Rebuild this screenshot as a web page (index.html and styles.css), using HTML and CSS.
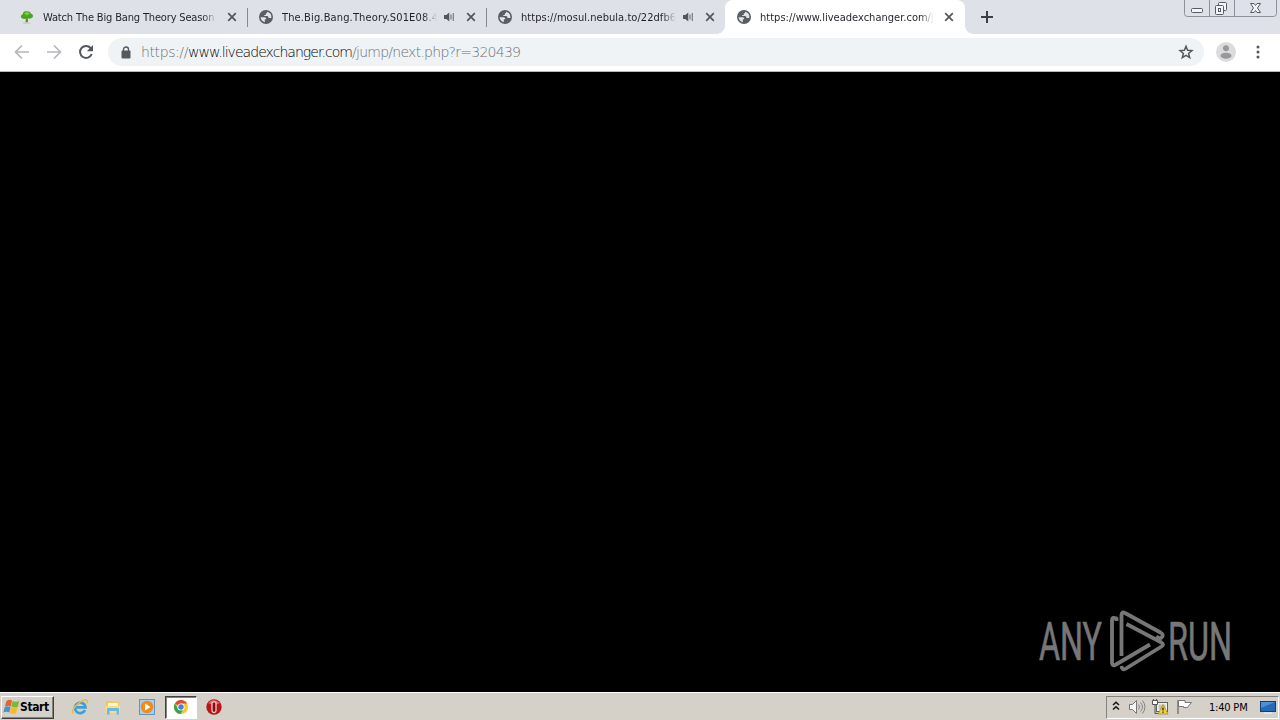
FILE: index.html
```html
<!DOCTYPE html>
<html lang="en">
<head>
<meta charset="utf-8">
<title>Browser</title>
<link rel="stylesheet" href="styles.css">
</head>
<body>
<svg width="0" height="0" class="defs">
  <symbol id="globe" viewBox="0 0 16 16"><circle cx="8" cy="8" r="7" fill="#5a5e63"/><path d="M2.500 8.300H6.500Q8.500 8.500 8.300 10.300H6.800V13.300Q3.200 12.300 2.500 8.300ZM9.300 2.700Q9.300 4.300 7.800 4.500V6H6.300V7H9.300Q10.500 7.200 10.500 9H13.300Q14 4.200 9.300 2.700Z" fill="#e1e4e9"/></symbol>
  <symbol id="close" viewBox="0 0 10 10"><path d="M1.200 1.200 8.800 8.800M8.800 1.200 1.200 8.800" stroke="#53575c" stroke-width="1.700"/></symbol>
  <symbol id="sound" viewBox="0 0 12 12"><path d="M1 4h2.300L6.300 1.500v9L3.300 8H1Z" fill="#53575c"/><path d="M8 3.500v5M10.300 2v8" stroke="#777b82" stroke-width="1.200"/></symbol>
</svg>
<header class="tabs">
  <div class="tab">
    <svg class="fav" viewBox="0 0 16 16"><path d="M7 9 6.500 13h2.500L8.800 9Z" fill="#916c3c"/><path d="M3 14q5-1.500 9 0-4 1-9 0" fill="#a8c79c"/><path d="M2 8.500Q1.500 6 4 5 4 2 7 2.300 11 1.500 12 4.500 15 6 13.500 8.500 11 10.500 8.500 9 4 11 2 8.500" fill="#48a51d"/><path d="M5 4.500q3-3 6 0L8 6.500Z" fill="#79d33a"/></svg>
    <span class="title t1">Watch The Big Bang Theory Season</span>
    <svg class="x"><use href="#close"/></svg>
  </div>
  <div class="tab">
    <svg class="fav"><use href="#globe"/></svg>
    <span class="title t2">The.Big.Bang.Theory.S01E08.4</span>
    <svg class="snd"><use href="#sound"/></svg>
    <svg class="x"><use href="#close"/></svg>
  </div>
  <div class="tab last">
    <svg class="fav"><use href="#globe"/></svg>
    <span class="title t3">https://mosul.nebula.to/22dfb6</span>
    <svg class="snd"><use href="#sound"/></svg>
    <svg class="x"><use href="#close"/></svg>
  </div>
  <div class="tab active">
    <svg class="fav"><use href="#globe"/></svg>
    <span class="title t4">https://www.liveadexchanger.com/j</span>
    <svg class="x"><use href="#close"/></svg>
  </div>
  <svg class="plus" viewBox="0 0 12 12"><path d="M6 0v12M0 6h12" stroke="#3c4046" stroke-width="2"/></svg>
  <svg class="winctl" viewBox="0 0 96 18">
    <path d="M.5-1V13.500q0 3 3 3H89.500q3 0 3-3V-1M25.500 0V16.500M50.500 0V16.500" fill="none" stroke="#8c9099"/>
    <g fill="#f4f5f7" stroke="#555a63"><rect x="7.500" y="8.500" width="11" height="4" rx="1"/><rect x="34.500" y="2.500" width="8" height="8" rx="1"/><rect x="31.500" y="5.500" width="8" height="9" rx="1"/><rect x="34.500" y="8.500" width="2" height="3"/><path d="M66.500 3.500h3.500l1.500 2 1.500-2h3.500l-3 4.500 3 4.500H73l-1.500-2-1.500 2h-3.500l3-4.500Z"/></g>
  </svg>
</header>
<div class="toolbar">
  <svg class="nav" viewBox="0 0 108 37"><path d="M29 18H16M22 11.500 15.500 18 22 24.500M47 18H60M54 11.500 60.500 18 54 24.500" fill="none" stroke="#b5b7ba" stroke-width="1.700"/><path d="M91 14.500A6 6 0 1 0 91.700 20" fill="none" stroke="#53575c" stroke-width="2"/><path d="M93 11v6.200h-6.200Z" fill="#53575c"/></svg>
  <div class="omnibox">
    <svg class="lock" viewBox="0 0 10 13"><rect x=".5" y="4.500" width="9" height="8" rx="1" fill="#55595e"/><path d="M2.500 5V3.300a2.500 2.300 0 0 1 5 0V5" fill="none" stroke="#55595e" stroke-width="1.400"/></svg>
    <div class="url"><span class="u1">https://</span><span class="u2">www.liveadexchanger.com</span><span class="u3">/jump/next.php?r=320439</span></div>
    <svg class="star" viewBox="0 0 16 16"><path d="m8 2.300 1.600 4 4.300.3-3.300 2.800 1.100 4.200L8 11.300l-3.700 2.300 1.100-4.200-3.300-2.800 4.300-.3Z" fill="none" stroke="#55595e" stroke-width="1.500"/></svg>
  </div>
  <svg class="user" viewBox="0 0 20 20"><circle cx="10" cy="10" r="10" fill="#dcdcdd"/><circle cx="10" cy="6.300" r="3" fill="#96989b"/><ellipse cx="10" cy="13.700" rx="5.500" ry="3" fill="#96989b"/></svg>
  <svg class="dots" viewBox="0 0 4 14"><g fill="#53575c"><circle cx="2" cy="2" r="1.500"/><circle cx="2" cy="7" r="1.500"/><circle cx="2" cy="12" r="1.500"/></g></svg>
</div>
<main>
  <svg class="mark" viewBox="0 0 200 70">
    <g fill="#777" stroke="#777" stroke-width=".7"><text x="3" y="55" textLength="63" lengthAdjust="spacingAndGlyphs">ANY</text><text x="132" y="55" textLength="64" lengthAdjust="spacingAndGlyphs">RUN</text></g>
    <g fill="none" stroke="#777" stroke-width="3.800" stroke-linejoin="round"><path d="M85.500 51V10Q86 6 89 8L124.500 27.500Q128.500 30 125.500 32.500 123 34 120 31.500"/><path d="M80.500 16V13.500Q76 11.500 76 15V58Q76.500 61.500 80 59.500L114 39.500"/><path d="M90.500 19 125.500 37.500Q128.500 39.500 125.500 41.500L90 63.500Q86 66 85.500 61"/></g>
  </svg>
</main>
<footer>
  <div class="start">
    <svg class="flag" viewBox="0 0 17 16"><path d="M3.500 2Q6.500 0 9 1.500L7.800 7.300Q5.500 6 2 7.500Z" fill="#e8602c"/><path d="M9.600 2Q12.500 3.500 16.200 2L14.700 8Q11 9.300 8.400 7.500Z" fill="#77b83d"/><path d="M1.800 8Q5 6.500 7.600 8L6.300 13.500Q4 12 .3 13.500Z" fill="#4693d4"/><path d="M8.200 8.200Q11 10 14.500 8.600L13 14.500Q9.500 15.500 6.900 13.800Z" fill="#f5bc22"/></svg>
    <span>Start</span>
  </div>
  <svg class="ql ie" viewBox="0 0 18 18"><path d="M14 12.200A5.300 5.300 0 1 1 14.500 9.300H5" fill="none" stroke="#3ba0dc" stroke-width="2.700"/><path d="M2 15.500C-1 12 8 4 13 2q5-1 2.700 3.500" fill="none" stroke="#e4bd49" stroke-width="1.400"/></svg>
  <svg class="ql ex" viewBox="0 0 18 18"><path d="M2 3h5l1 1h7v11H2Z" fill="#eac95f"/><path d="M4 5h10v4H4Z" fill="#fbf4c3"/><path d="M2 8h14v7H2Z" fill="#f4de8b"/><path d="M3 16.500V11q0-1 1-1h10q1 0 1 1v5.500h-2.500v-3.500h-7v3.500Z" fill="#6bb9df"/></svg>
  <svg class="ql wm" viewBox="0 0 18 18"><rect x="1.500" y="1.500" width="15" height="15" fill="#a9cdeb" stroke="#6394c3"/><circle cx="9" cy="9" r="6.200" fill="#ef8b1b"/><path d="M7 5.500v7L12.500 9Z" fill="#fff"/></svg>
  <div class="chrome"><svg viewBox="0 0 16 16"><circle cx="8" cy="8" r="7" fill="#f6c928"/><path d="M8 8 1.900 4.500A7 7 0 0 1 14.100 4.500H8Z" fill="#df4937"/><path d="M1.900 4.500A7 7 0 0 0 7.500 15L10.500 10 5 9.500Z" fill="#35a355"/><circle cx="8" cy="8" r="3.600" fill="#fff"/><circle cx="8" cy="8" r="2.700" fill="#477fdc"/></svg></div>
  <svg class="ql op" viewBox="0 0 18 18"><circle cx="9" cy="9" r="7.700" fill="#b7161a"/><path d="M3 5q5-6 12 0-6 3-12 0" fill="#db6262"/><rect x="7" y="3.800" width="4" height="10.500" rx="1.500" fill="#8d090c" stroke="#f5dddd" stroke-width="1.200"/></svg>
  <div class="tray">
    <svg class="chev" viewBox="0 0 8 10"><path d="m1 4 3-2.800L7 4M1 8.500l3-2.800 3 2.800" fill="none" stroke="#111" stroke-width="1.500"/></svg>
    <svg class="vol" viewBox="0 0 18 16"><path d="M1.500 5.500h3L8.500 1.500v13l-4-4h-3Z" fill="#f6f6f4" stroke="#777"/><path d="M10.500 5.500q2 2.500 0 5M12.500 3.500q4 4.500 0 9M14.500 1.500q5 6.500 0 13" fill="none" stroke="#858585"/></svg>
    <svg class="net" viewBox="0 0 17 16"><rect x="4.500" y="3.500" width="11" height="9" fill="#f0f0ec" stroke="#62645f"/><rect x="6.500" y="5.500" width="7" height="5" fill="#c5c7c2"/><path d="M.5 1.500h5v4h-5ZM3 5.500v9M3 14.500h5M1.500 0v2M4.500 0v2" fill="#fff" stroke="#555"/><path d="M11 5.500 16 15H6Z" fill="#f5d334" stroke="#a1841a" stroke-width=".7"/><path d="M11 8.500v3m0 1v1.300" stroke="#222" stroke-width="1.300"/></svg>
    <svg class="act" viewBox="0 0 17 16"><path d="M2 1v14" stroke="#777" stroke-width="1.500"/><path d="M2.500 1.500h6.500v2h6.500l-3 3.500-1 1.500h-4V7.500h-5Z" fill="#fff" stroke="#777"/></svg>
    <span class="clock">1:40 PM</span>
    <svg class="desk" viewBox="0 0 16 13"><rect x=".5" y=".5" width="15" height="10" fill="#236bb9" stroke="#153c75"/><path d="M1 1h14L1 7Z" fill="#508fd5"/><path d="M4 12h8" stroke="#dce9f7" stroke-width="1.500"/></svg>
  </div>
</footer>
</body>
</html>
```
FILE: styles.css
```css
* { box-sizing: border-box; }
body { margin: 0; width: 1280px; height: 720px; overflow: hidden; display: flex; flex-direction: column; background: #000; font-family: "DejaVu Sans Condensed", "DejaVu Sans", sans-serif; font-stretch: condensed; }
svg { flex: none; display: block; }
.defs { position: absolute; }
.tabs { height: 34px; flex: none; background: #dee1e8; display: flex; padding-left: 9px; }
.tab { width: 239px; height: 34px; flex: none; display: flex; align-items: center; padding: 0 11px 0 10px; background: linear-gradient(#858991, #858991) right 8px / 1px 19px no-repeat; }
.tab.last { background: none; }
.tab.active { position: relative; margin-left: -1px; width: 240px; padding: 0 11px; background: #fff; border-radius: 8px 8px 0 0; }
.tab.active::before, .tab.active::after { content: ""; position: absolute; bottom: 0; width: 8px; height: 8px; }
.tab.active::before { left: -8px; background: radial-gradient(circle at 0 0, transparent 7.5px, #fff 8px); }
.tab.active::after { right: -8px; background: radial-gradient(circle at 100% 0, transparent 7.5px, #fff 8px); }
.fav { width: 16px; height: 16px; margin-right: 8px; }
.title { flex: 1; min-width: 0; font-size: 11px; line-height: 16px; padding-top: 1px; color: #1f2227; white-space: nowrap; margin-right: 10px; -webkit-mask-image: linear-gradient(to left, transparent, #000 14px); mask-image: linear-gradient(to left, transparent, #000 14px); }
.t1 { letter-spacing: -.16px; }
.t2 { letter-spacing: .14px; }
.t3 { letter-spacing: .05px; }
.t4 { letter-spacing: .02px; }
.t2, .t3 { margin-right: 6px; }
.snd { width: 12px; height: 12px; margin-right: 11px; }
.x { width: 10px; height: 10px; }
.active .x { margin-right: 0; }
.plus { width: 12px; height: 12px; margin: 11px 0 0 16px; }
.winctl { width: 96px; height: 18px; margin-left: auto; }
.toolbar { height: 38px; flex: none; background: #fff; border-bottom: 1px solid #b5b7ba; display: flex; align-items: center; }
.nav { width: 108px; height: 37px; }
.omnibox { width: 1096px; height: 28px; margin-bottom: 1px; border-radius: 14px; background: #f0f3f5; display: flex; align-items: center; padding: 0 10px 0 13px; }
.lock { width: 10px; height: 13px; margin-right: 10px; }
.url { font-size: 14px; line-height: 20px; font-family: "DejaVu Sans", sans-serif; font-stretch: normal; font-weight: 200; flex: 1; white-space: nowrap; color: #6b6f74; }
.url span { display: inline-block; }
.u1 { letter-spacing: -.4px; }
.u2 { color: #000; letter-spacing: -.95px; }
.u3 { letter-spacing: -.74px; }
.star { width: 16px; height: 16px; }
.user { width: 20px; height: 20px; margin: 0 0 1px 12px; }
.dots { width: 4px; height: 14px; margin: 0 0 1px 20px; }
main { flex: 1; display: flex; justify-content: flex-end; align-items: flex-end; padding: 0 44px 17px 0; }
.mark { width: 200px; height: 70px; overflow: visible; font: 400 53px Roboto, sans-serif; }
footer { height: 28px; flex: none; background: #d5d1c9; box-shadow: inset 0 1px #fff; display: flex; align-items: center; padding: 2px 1px 0; }
.start { width: 53px; height: 23px; border: 1px solid; border-color: #fff #404040 #404040 #fff; box-shadow: inset -1px -1px #85827c; display: flex; align-items: center; font-size: 12px; font-weight: bold; letter-spacing: -.4px; color: #000; }
.flag { width: 17px; height: 16px; margin-left: 1px; }
.ql { width: 18px; height: 18px; }
.ie { margin-left: 17px; }
.ex { margin-left: 15px; }
.wm { margin-left: 16px; }
.chrome { width: 32px; height: 23px; margin-left: 9px; background: #fff; border: 1px solid; border-color: #404040 #fff #fff #404040; box-shadow: inset 1px 1px #85827c; display: flex; align-items: center; justify-content: center; }
.chrome svg { width: 16px; height: 16px; }
.op { margin-left: 8px; }
.tray { width: 173px; height: 23px; margin-left: auto; border: 1px solid; border-color: #85827c #fff #fff #85827c; display: flex; align-items: center; padding-left: 5px; }
.chev { width: 8px; height: 10px; margin-bottom: 2px; }
.vol { width: 18px; height: 16px; margin-left: 8px; }
.net { width: 17px; height: 16px; margin-left: 6px; }
.act { width: 17px; height: 16px; margin-left: 7px; }
.clock { font-size: 11px; letter-spacing: -.2px; color: #000; margin-left: 16px; width: 51px; white-space: nowrap; }
.desk { width: 16px; height: 13px; }
```
